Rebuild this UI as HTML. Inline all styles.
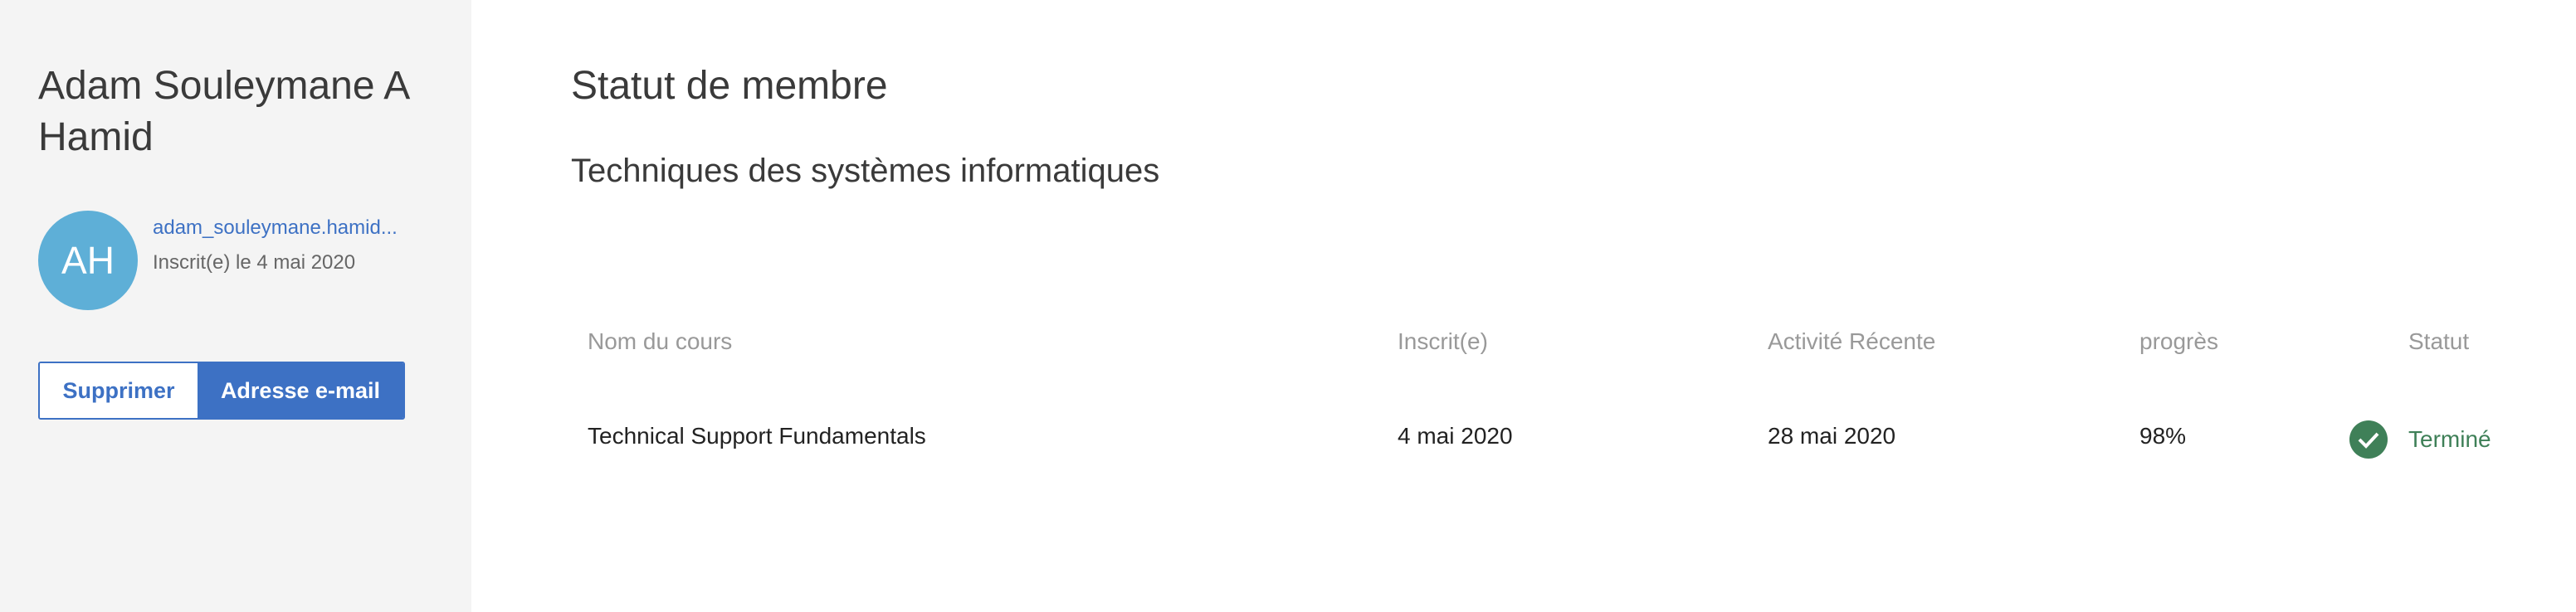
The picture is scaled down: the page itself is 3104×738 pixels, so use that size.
<!DOCTYPE html>
<html><head><meta charset="utf-8"><style>
*{margin:0;padding:0;box-sizing:border-box}
body{width:3104px;height:738px;background:#fff;font-family:"Liberation Sans",sans-serif;position:relative;overflow:hidden}
.side{position:absolute;left:0;top:0;width:568px;height:738px;background:#f4f4f4}
.a{position:absolute;white-space:nowrap}
</style></head><body>
<div class="side"></div>
<div class="a" style="left:46px;top:73px;font-size:48px;line-height:62px;color:#3a3a3a">Adam Souleymane A<br>Hamid</div>
<div class="a" style="left:46px;top:254px;width:120px;height:120px;border-radius:50%;background:#5eafd7;color:#fff;font-size:46px;line-height:120px;text-align:center">AH</div>
<div class="a" style="left:184px;top:260px;font-size:24px;line-height:30px;color:#3d71c4">adam_souleymane.hamid...</div>
<div class="a" style="left:184px;top:302px;font-size:24px;line-height:30px;color:#666">Inscrit(e) le 4 mai 2020</div>
<div class="a" style="left:46px;top:436px;width:442px;height:70px;border:2px solid #3d71c4;border-radius:3px;overflow:hidden;display:flex">
<div style="width:190px;background:#fff;color:#3d71c4;font-size:27px;font-weight:bold;line-height:66px;text-align:center">Supprimer</div>
<div style="flex:1;background:#3d71c4;color:#fff;font-size:27px;font-weight:bold;line-height:66px;text-align:center">Adresse e-mail</div>
</div>
<div class="a" style="left:688px;top:74px;font-size:48px;line-height:60px;color:#3a3a3a">Statut de membre</div>
<div class="a" style="left:688px;top:180px;font-size:40px;line-height:52px;color:#3a3a3a">Techniques des systèmes informatiques</div>
<div style="color:#999;font-size:28px;line-height:36px">
<div class="a" style="left:708px;top:394px">Nom du cours</div>
<div class="a" style="left:1684px;top:394px">Inscrit(e)</div>
<div class="a" style="left:2130px;top:394px">Activité Récente</div>
<div class="a" style="left:2578px;top:394px">progrès</div>
<div class="a" style="left:2902px;top:394px">Statut</div>
</div>
<div style="color:#222;font-size:28px;line-height:36px">
<div class="a" style="left:708px;top:508px">Technical Support Fundamentals</div>
<div class="a" style="left:1684px;top:508px">4 mai 2020</div>
<div class="a" style="left:2130px;top:508px">28 mai 2020</div>
<div class="a" style="left:2578px;top:508px">98%</div>
</div>
<svg class="a" style="left:2831px;top:507px" width="46" height="46" viewBox="0 0 46 46"><circle cx="23" cy="23" r="23" fill="#3f8058"/><path d="M12 23l8 8 14-15" fill="none" stroke="#fff" stroke-width="4"/></svg>
<div class="a" style="left:2902px;top:512px;font-size:28px;line-height:36px;color:#3f8058">Terminé</div>
</body></html>
